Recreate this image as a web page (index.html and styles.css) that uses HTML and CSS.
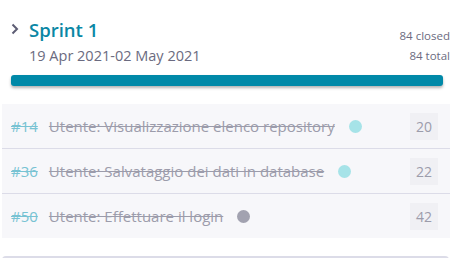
FILE: index.html
```html
<!DOCTYPE html>
<html lang="en">
<head>
  <meta charset="UTF-8">
  <meta name="viewport" content="width=device-width, initial-scale=1.0">
  <title>Sprint 1</title>
  <link rel="stylesheet" href="styles.css">
</head>
<body>

  <div class="sprint">
    <div class="sprint-header">
      <div class="sprint-toggle">
        <svg width="8" height="12" viewBox="0 0 8 12"><path d="M1.5 1.5 L6 6 L1.5 10.5" fill="none" stroke="#5d5d74" stroke-width="2"/></svg>
      </div>
      <div class="sprint-info">
        <h2 class="sprint-title">Sprint 1</h2>
        <div class="sprint-dates">19 Apr 2021-02 May 2021</div>
      </div>
      <div class="sprint-stats">
        <div>84 closed</div>
        <div>84 total</div>
      </div>
    </div>

    <div class="progress"></div>

    <ul class="issues">
      <li class="issue">
        <span class="issue-ref">#14</span>
        <span class="issue-title">Utente: Visualizzazione elenco repository</span>
        <span class="dot dot-done"></span>
        <span class="points">20</span>
      </li>
      <li class="issue">
        <span class="issue-ref">#36</span>
        <span class="issue-title">Utente: Salvataggio dei dati in database</span>
        <span class="dot dot-done"></span>
        <span class="points">22</span>
      </li>
      <li class="issue">
        <span class="issue-ref">#50</span>
        <span class="issue-title">Utente: Effettuare il login</span>
        <span class="dot dot-closed"></span>
        <span class="points">42</span>
      </li>
    </ul>

    <div class="next-sprint"></div>
  </div>

</body>
</html>
```

FILE: styles.css
```css
body {
  margin: 0;
  font-family: "Open Sans", "Noto Sans", sans-serif;
  background-color: #fff;
  color: #6b6b80;
}

.sprint {
  width: 454px;
}

.sprint-header {
  display: flex;
  align-items: flex-start;
  padding: 18px 4px 0 11px;
}

.sprint-toggle {
  width: 18px;
  padding-top: 5px;
}

.sprint-toggle svg {
  display: block;
}

.sprint-info {
  flex: 1;
}

.sprint-title {
  margin: 0;
  font-size: 18.5px;
  font-weight: 600;
  line-height: 24px;
  color: #0a87a5;
}

.sprint-dates {
  margin-top: 5px;
  font-size: 14.5px;
  line-height: 18px;
}

.sprint-stats {
  padding-top: 8px;
  text-align: right;
  font-size: 11.5px;
  line-height: 20px;
}

.progress {
  height: 11px;
  margin: 9px 11px 0 11px;
  background-color: #0089a8;
  border-radius: 3px;
  box-shadow: 0 2px 3px rgba(0, 0, 0, 0.3);
}

.issues {
  list-style: none;
  margin: 18px 4px 0 2px;
  padding: 0;
  background-color: #f7f7fa;
}

.issue {
  display: flex;
  align-items: center;
  height: 44px;
  padding: 0 12px 0 9px;
  border-bottom: 1px solid #dcdce8;
  font-size: 15px;
}

.issue:last-child {
  border-bottom: none;
}

.issue-ref {
  color: #78c3d3;
  text-decoration: line-through;
  margin-right: 11px;
}

.issue-title {
  color: #9c9cab;
  text-decoration: line-through;
}

.dot {
  width: 13px;
  height: 13px;
  border-radius: 50%;
  margin-left: 14px;
}

.dot-done {
  background-color: #a6e3e8;
}

.dot-closed {
  background-color: #a2a2b0;
}

.points {
  margin-left: auto;
  width: 28px;
  height: 27px;
  line-height: 27px;
  text-align: center;
  font-size: 14px;
  background-color: #f0f0f4;
  color: #9c9cab;
}

.next-sprint {
  height: 4px;
  margin: 18px 5px 0 2px;
  border-top: 2px solid #dcdce8;
  border-radius: 4px 4px 0 0;
}
```
